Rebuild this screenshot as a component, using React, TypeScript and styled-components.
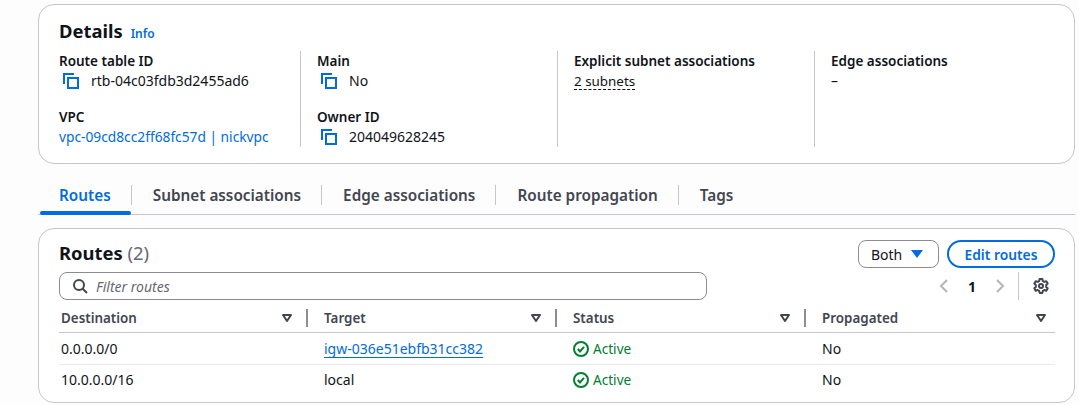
import styled, { createGlobalStyle } from "styled-components";

const Global = createGlobalStyle`
    body {
        margin: 0;
        background: #fdfdfd;
        font-family: "Noto Sans", "Open Sans", sans-serif;
        font-size: 14px;
        color: #0f141a;
    }
`;

const Page = styled.div`
    width: 1079px;
    height: 405px;
    overflow: hidden;
    box-sizing: border-box;
    padding: 4px 4px 0 38px;
`;

const Card = styled.section`
    background: #fff;
    border: 1px solid #c6c6cd;
    border-radius: 16px;
    box-sizing: border-box;
    padding: 0 20px;
`;

const DetailsCard = styled(Card)`
    width: 1037px;
    height: 160px;
`;

const DetailsTitle = styled.div`
    display: flex;
    align-items: baseline;
    gap: 8px;
    height: 46px;
    padding-top: 11px;
    box-sizing: border-box;
`;

const H2 = styled.h2`
    margin: 0;
    font-size: 18.4px;
    line-height: 30px;
    font-weight: 700;
`;

const Info = styled.a`
    color: #006ce0;
    font-size: 12px;
    font-weight: 600;
`;

const DetailsGrid = styled.div`
    display: grid;
    grid-template-columns: 241px 257px 257px 1fr;
`;

const Column = styled.div<{ $first?: boolean }>`
    height: 96px;
    box-sizing: border-box;
    padding-left: ${(p) => (p.$first ? "0" : "16px")};
    border-left: ${(p) => (p.$first ? "none" : "1px solid #c6c6cd")};
    display: flex;
    flex-direction: column;
    gap: 16px;
`;

const Field = styled.div`
    height: 40px;
`;

const Label = styled.div`
    font-size: 13.5px;
    line-height: 20px;
    font-weight: 600;
`;

const Value = styled.div`
    line-height: 20px;
    white-space: nowrap;
`;

const CopyValue = styled(Value)`
    display: flex;
    align-items: center;
    gap: 12px;
    padding-left: 4px;
`;

const Link = styled.a`
    color: #006ce0;
    font-size: 13.75px;
`;

const Dotted = styled.span`
    display: inline-block;
    line-height: 15px;
    font-size: 13.4px;
    border-bottom: 1px dashed #0f141a;
`;

const Tabs = styled.nav`
    display: flex;
    align-items: center;
    height: 47px;
    margin-top: 4px;
    padding-top: 8px;
    border-bottom: 1px solid #c6c6cd;
    box-sizing: border-box;
    width: 1037px;
`;

const Tab = styled.div<{ $active?: boolean; $first?: boolean }>`
    position: relative;
    height: 20px;
    line-height: 20px;
    padding: 0 20px 0 21px;
    font-size: 15.3px;
    font-weight: 600;
    color: ${(p) => (p.$active ? "#006ce0" : "#424650")};
    border-left: ${(p) => (p.$first ? "none" : "1px solid #c6c6cd")};
    white-space: nowrap;
    &::after {
        content: "";
        display: ${(p) => (p.$active ? "block" : "none")};
        position: absolute;
        left: 2px;
        right: 0;
        bottom: -10px;
        height: 4px;
        border-radius: 2px;
        background: #006ce0;
    }
`;

const RoutesCard = styled(Card)`
    width: 1037px;
    height: 175px;
    margin-top: 13px;
    padding-right: 19px;
`;

const RoutesHead = styled.div`
    display: flex;
    justify-content: space-between;
    align-items: flex-start;
    height: 43px;
    padding-top: 9px;
    box-sizing: border-box;
`;

const Count = styled.span`
    font-weight: 400;
    color: #656871;
`;

const Actions = styled.div`
    display: flex;
    gap: 8px;
    margin-top: 2px;
`;

const SelectBox = styled.div`
    width: 81px;
    height: 28px;
    box-sizing: border-box;
    border: 1px solid #8c8c94;
    border-radius: 8px;
    display: flex;
    align-items: center;
    justify-content: space-between;
    padding: 0 15px 0 12px;
    font-size: 14px;
`;

const PrimaryOutline = styled.button`
    width: 108px;
    height: 28px;
    box-sizing: border-box;
    border: 2px solid #006ce0;
    border-radius: 20px;
    background: #fff;
    color: #006ce0;
    font: 600 13.8px "Noto Sans", sans-serif;
    padding: 0;
`;

const FilterRow = styled.div`
    display: flex;
    justify-content: space-between;
    height: 28px;
`;

const FilterInput = styled.div`
    width: 648px;
    height: 28px;
    box-sizing: border-box;
    border: 1px solid #8c8c94;
    border-radius: 8px;
    display: flex;
    align-items: center;
    gap: 8px;
    padding-left: 12px;
    font-style: italic;
    font-size: 14px;
    color: #656871;
`;

const Pager = styled.div`
    display: flex;
    align-items: center;
    height: 28px;
    padding-right: 6px;
`;

const PageNumber = styled.span`
    width: 44px;
    text-align: center;
    font-weight: 700;
    font-size: 14px;
`;

const PagerSep = styled.div`
    width: 1px;
    height: 28px;
    margin: 0 14px 0 12px;
    background: #c6c6cd;
`;

const TableRow = styled.div<{ $head?: boolean; $last?: boolean }>`
    display: grid;
    grid-template-columns: 249px 249px 249px 1fr;
    width: 996px;
    height: ${(p) => (p.$head ? "33px" : p.$last ? "31px" : "32px")};
    padding-top: ${(p) => (p.$head ? "4px" : "0")};
    padding-bottom: ${(p) => (p.$last ? "2px" : "0")};
    box-sizing: border-box;
    align-items: center;
    border-bottom: ${(p) => (p.$head ? "1px solid #c6c6cd" : p.$last ? "none" : "1px solid #e9e9ed")};
`;

const HeadCell = styled.div<{ $first?: boolean; $last?: boolean }>`
    display: flex;
    align-items: center;
    justify-content: space-between;
    box-sizing: border-box;
    height: 18px;
    padding-left: ${(p) => (p.$first ? "2px" : "16px")};
    padding-right: ${(p) => (p.$last ? "8px" : "13px")};
    border-right: ${(p) => (p.$last ? "none" : "2px solid #8c8c94")};
    font-size: 13.4px;
    font-weight: 600;
    color: #424650;
`;

const Cell = styled.div<{ $first?: boolean }>`
    padding-left: ${(p) => (p.$first ? "2px" : "16px")};
    font-size: 14px;
    display: flex;
    align-items: center;
    gap: 4px;
`;

const UnderLink = styled.a`
    color: #006ce0;
    text-decoration: underline;
    text-underline-offset: 3px;
`;

const Active = styled.span`
    color: #00802f;
    font-size: 13.6px;
`;

const CopyIcon = () => (
    <svg width="16" height="16" viewBox="0 0 16 16" fill="none" stroke="#006ce0" strokeWidth="2">
        <path d="M1 11V1h10" />
        <rect x="5" y="5" width="10" height="10" />
    </svg>
);

const SearchIcon = () => (
    <svg width="16" height="16" viewBox="0 0 16 16" fill="none" stroke="#424650" strokeWidth="2">
        <circle cx="7" cy="7" r="5" />
        <path d="M10.5 10.5 15 15" />
    </svg>
);

const FilterCaret = () => (
    <svg width="12" height="10" viewBox="0 0 12 10" fill="none" stroke="#424650" strokeWidth="2" strokeLinejoin="round">
        <path d="M2 2h8L6 8z" />
    </svg>
);

const Chevron = ({ right }: { right?: boolean }) => (
    <svg width="12" height="16" viewBox="0 0 12 16" fill="none" stroke="#b4b4bb" strokeWidth="2">
        <path d={right ? "M3 2l6 6-6 6" : "M9 2L3 8l6 6"} />
    </svg>
);

const SelectCaret = () => (
    <svg width="12" height="8" viewBox="0 0 12 8">
        <path d="M0 0h12L6 8z" fill="#006ce0" />
    </svg>
);

const CheckIcon = () => (
    <svg width="16" height="16" viewBox="0 0 16 16" fill="none" stroke="#00802f" strokeWidth="2">
        <circle cx="8" cy="8" r="7" />
        <path d="M4.8 8l2.2 2.4 4-4.6" />
    </svg>
);

const GearIcon = () => (
    <svg width="16" height="16" viewBox="0 0 16 16" fill="none" stroke="#424650" strokeWidth="2" strokeLinejoin="round">
        <path d="M6.6 1h2.8l.4 2 1.5.9 2-.7 1.4 2.4-1.5 1.4v1.9l1.5 1.3-1.4 2.5-2-.7-1.5.9-.4 2H6.6l-.4-2-1.5-.9-2 .7L1.3 10.2l1.5-1.3V7L1.3 5.6l1.4-2.4 2 .7 1.5-.9z" />
        <circle cx="8" cy="8" r="2" />
    </svg>
);

const columns = ["Destination", "Target", "Status", "Propagated"];

export default function App() {
    return (
        <Page>
            <Global />
            <DetailsCard>
                <DetailsTitle>
                    <H2>Details</H2>
                    <Info>Info</Info>
                </DetailsTitle>
                <DetailsGrid>
                    <Column $first>
                        <Field>
                            <Label>Route table ID</Label>
                            <CopyValue><CopyIcon />rtb-04c03fdb3d2455ad6</CopyValue>
                        </Field>
                        <Field>
                            <Label>VPC</Label>
                            <Value><Link>vpc-09cd8cc2ff68fc57d | nickvpc</Link></Value>
                        </Field>
                    </Column>
                    <Column>
                        <Field>
                            <Label>Main</Label>
                            <CopyValue><CopyIcon />No</CopyValue>
                        </Field>
                        <Field>
                            <Label>Owner ID</Label>
                            <CopyValue><CopyIcon />204049628245</CopyValue>
                        </Field>
                    </Column>
                    <Column>
                        <Field>
                            <Label>Explicit subnet associations</Label>
                            <Value><Dotted>2 subnets</Dotted></Value>
                        </Field>
                    </Column>
                    <Column>
                        <Field>
                            <Label>Edge associations</Label>
                            <Value>–</Value>
                        </Field>
                    </Column>
                </DetailsGrid>
            </DetailsCard>
            <Tabs>
                <Tab $first $active>Routes</Tab>
                <Tab>Subnet associations</Tab>
                <Tab>Edge associations</Tab>
                <Tab>Route propagation</Tab>
                <Tab>Tags</Tab>
            </Tabs>
            <RoutesCard>
                <RoutesHead>
                    <H2>Routes <Count>(2)</Count></H2>
                    <Actions>
                        <SelectBox>Both <SelectCaret /></SelectBox>
                        <PrimaryOutline>Edit routes</PrimaryOutline>
                    </Actions>
                </RoutesHead>
                <FilterRow>
                    <FilterInput><SearchIcon />Filter routes</FilterInput>
                    <Pager>
                        <Chevron />
                        <PageNumber>1</PageNumber>
                        <Chevron right />
                        <PagerSep />
                        <GearIcon />
                    </Pager>
                </FilterRow>
                <TableRow $head>
                    {columns.map((c, i) => (
                        <HeadCell key={c} $first={i === 0} $last={i === columns.length - 1}>
                            {c}<FilterCaret />
                        </HeadCell>
                    ))}
                </TableRow>
                <TableRow>
                    <Cell $first>0.0.0.0/0</Cell>
                    <Cell><UnderLink>igw-036e51ebfb31cc382</UnderLink></Cell>
                    <Cell><CheckIcon /><Active>Active</Active></Cell>
                    <Cell>No</Cell>
                </TableRow>
                <TableRow $last>
                    <Cell $first>10.0.0.0/16</Cell>
                    <Cell>local</Cell>
                    <Cell><CheckIcon /><Active>Active</Active></Cell>
                    <Cell>No</Cell>
                </TableRow>
            </RoutesCard>
        </Page>
    );
}
